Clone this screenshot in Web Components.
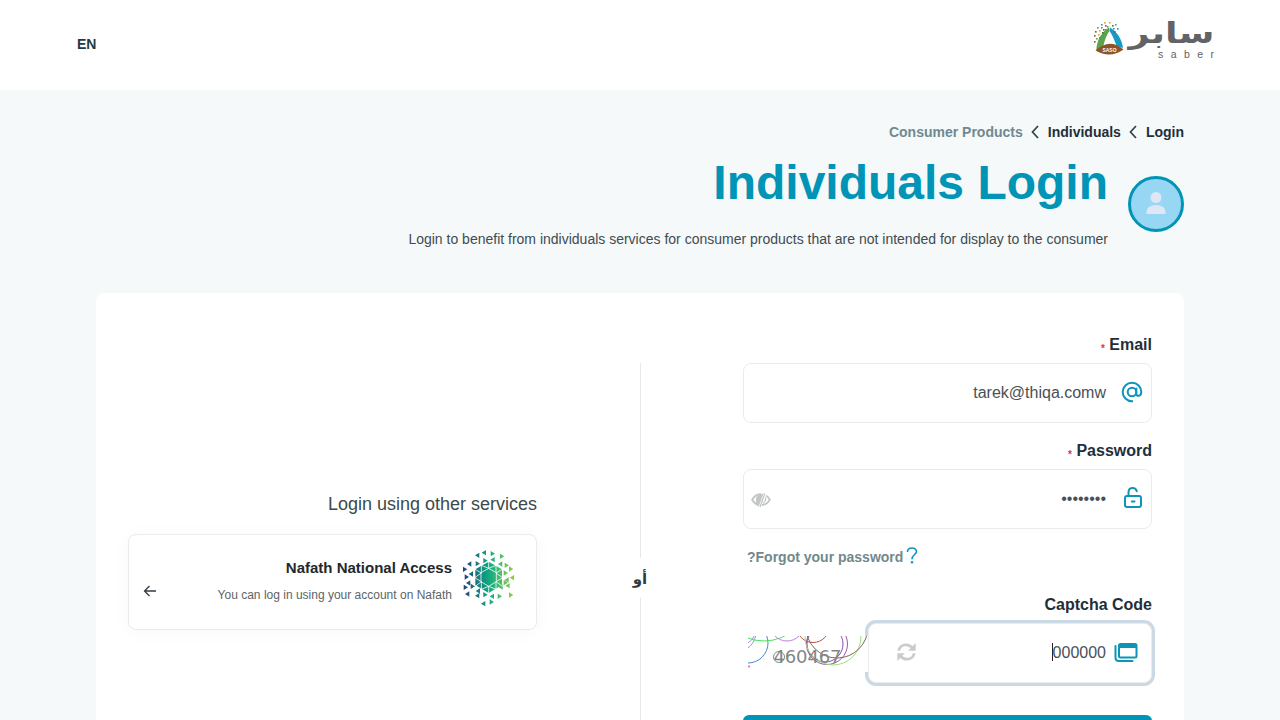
<!DOCTYPE html>
<html lang="ar" dir="rtl">
<head>
<meta charset="utf-8">
<title>Saber - Individuals Login</title>
<style>
html,body{margin:0;padding:0}
body{width:1280px;height:720px;overflow:hidden;background:#f5f9fa;font-family:"Liberation Sans",Arial,sans-serif;color:#1f2f3a}
</style>
</head>
<body>
<saber-page></saber-page>
<script>
const define = (name, html, setup) => customElements.define(name, class extends HTMLElement {
  constructor() {
    super();
    const t = document.createElement('template');
    t.innerHTML = html;
    this.attachShadow({mode: 'open'}).append(t.content.cloneNode(true));
  }
  connectedCallback() { if (setup) setup(this, this.shadowRoot); }
});

define('saber-logo', `
<style>:host{display:block;width:124px;height:42px}svg{display:block;overflow:visible}</style>
<svg width="124" height="42" viewBox="0 0 124 42" direction="ltr">
  <path d="M17 6.500C10 11 5 18 4.300 29L11.500 24.500C12.500 19 15 13.500 17.300 10Z" fill="#5fa348"/>
  <path d="M18 6.500C25 11 30 18 31 27L24.500 25C22.500 19 20 13 17.300 10Z" fill="#159bc4"/>
  <path d="M3.500 29.500Q17.500 16.500 31.500 28.500Q18 38 3.500 29.500Z" fill="#8b5527"/>
  <g id="dots"></g>
  <text x="17.500" y="31" font-family="Liberation Sans" font-weight="700" font-size="6" fill="#fff" text-anchor="middle" textLength="14" lengthAdjust="spacingAndGlyphs">SASO</text>
  <text x="36.500" y="22" font-family="DejaVu Sans,sans-serif" font-weight="700" font-size="29" fill="#626366" textLength="86" lengthAdjust="spacingAndGlyphs">سابر</text>
  <text x="66" y="37.300" font-family="Liberation Sans,sans-serif" font-size="10.500" fill="#626366" textLength="56">saber</text>
</svg>`, (el, r) => {
  const c = ['#5fa348','#159bc4','#8b5527','#e0a33a','#4d6f3c'];
  const p = [[5,6],[9,3],[13,4],[17,1],[20,4],[23,3],[25,7],[3,10],[7,9],[11,8],[15,5],[21,7],[2,14],[6,13],[10,11],[4,17],[7,16],[2,20],[12,1],[22,10],[13,8],[9,6]];
  r.getElementById('dots').innerHTML = p.map((q, i) => `<rect x="${q[0]}" y="${q[1]}" width="1.600" height="1.600" fill="${c[i % 5]}"/>`).join('');
});

define('site-header', `
<style>
:host{display:flex;box-sizing:border-box;height:90px;background:#fff;padding:21px 64px 0 77px;justify-content:space-between;align-items:flex-start}
a{font:700 14px/20px "Liberation Sans",Arial,sans-serif;color:#1f3a40;margin-top:13px}
</style>
<saber-logo></saber-logo><a>EN</a>`);

define('crumb-trail', `
<style>
:host{display:flex;height:20px;align-items:center;font-weight:700;font-size:14px;line-height:20px;direction:ltr;justify-content:flex-end}
.m{color:#71898e}svg{margin:0 8px;flex:none}span{white-space:nowrap}
</style>
<span class="m">Consumer Products</span>
<svg width="9" height="14" viewBox="0 0 9 14"><path d="M7 1L1.500 7L7 13" fill="none" stroke="#2f4248" stroke-width="1.700"/></svg>
<span>Individuals</span>
<svg width="9" height="14" viewBox="0 0 9 14"><path d="M7 1L1.500 7L7 13" fill="none" stroke="#2f4248" stroke-width="1.700"/></svg>
<span>Login</span>`);

define('user-badge', `
<style>:host{display:flex;box-sizing:border-box;width:56px;height:56px;border:3px solid #0094b6;border-radius:50%;background:#97d7f3;align-items:center;justify-content:center;flex:none}svg{margin-top:-2px}</style>
<svg width="20" height="22" viewBox="0 0 20 22"><circle cx="10" cy="5.500" r="5.500" fill="#dfe6f5"/><path d="M.500 21.500V20C.500 16 4 13 10 13S19.500 16 19.500 20V21.500Q19.500 22 19 22H1Q.500 22 .500 21.500Z" fill="#dfe6f5"/></svg>`);

define('page-intro', `
<style>
:host{display:block;padding:32px 96px 0;height:171px}
.row{display:flex;gap:20px;align-items:flex-start}
user-badge{margin-top:34px}
h1{margin:13px 0 0;font-size:48px;line-height:56px;font-weight:700;color:#0094b6}
p{margin:18px 0 0;font-size:14px;line-height:20px;color:#424b50;white-space:nowrap}
</style>
<crumb-trail></crumb-trail>
<div class="row"><user-badge></user-badge><div><h1>Individuals Login</h1><p>Login to benefit from individuals services for consumer products that are not intended for display to the consumer</p></div></div>`);

define('form-label', `
<style>:host{display:block;height:20px;font-size:16px;line-height:20px;font-weight:700;color:#1f2f3a}
i{font-style:normal;font-weight:700;color:#dc3545;font-size:10px;line-height:10px;display:none;vertical-align:-2px}:host([required]) i{display:inline-block}</style><slot></slot> <i>*</i>`);

define('input-box', `
<style>
:host{display:flex;box-sizing:border-box;height:60px;border:1px solid #e9ebec;border-radius:8px;background:#fff;align-items:center;padding:0 8px 0 7px}
.v{flex:1;font-size:16px;line-height:20px;color:#495057;display:flex;direction:ltr;justify-content:flex-end;align-items:center}
:host([focus]){box-shadow:0 0 0 3px #cbd9e4}
slot{display:flex}
</style>
<slot name="icon"></slot><div class="v"><slot></slot></div><slot name="end"></slot>`);

define('ui-icon', `<style>:host{display:block;flex:none}svg{display:block}</style><svg></svg>`, (el, r) => {
  const b = '#0d95b7', icons = {
    at: [22,22,`<g fill="none" stroke="${b}" stroke-width="2"><circle cx="11" cy="11" r="4.300"/><path d="M15.300 6.700V12.500C15.300 16 20.300 15.500 20.300 11A9.300 9.300 0 1 0 11 20.300H12"/></g>`],
    lock: [18,21,`<g fill="none" stroke="${b}" stroke-width="2" stroke-linecap="round"><rect x="1" y="9" width="16" height="11" rx="2"/><path d="M4.500 9V5.500C4.500-.200 11.500-.200 12.800 4.200M7.800 14.500H10.500"/></g>`],
    eye: [20,16,`<g fill="none" stroke="#c3c5c6" stroke-width="1.900"><path d="M10 2.300C5.500 2.300 2.800 5 1.200 7.700C2.500 10 4.500 12.200 7 12.800M15 3.500C17 4.600 18 6 18.800 7.700C17.300 10.700 14.500 12.800 11 13"/></g><path d="M12.500 1.500L7.500 15L5 10.500V6Q7 2.500 12.500 1.500Z" fill="#c3c5c6"/><path d="M13.800 1.500L9 15M14.500 5.500Q15.500 9 12.300 11" fill="none" stroke="#c3c5c6" stroke-width="1.300"/>`],
    sync: [19,18,`<g fill="none" stroke="#cbcbcb" stroke-width="2.700"><path d="M1.700 7.800C3 1.500 11-.500 15.700 5.200M17.300 10.200C16 16.500 8 18.500 3.300 12.800"/></g><path d="M18.700 0V7.800H11.200ZM.300 18V10.200H7.800Z" fill="#cbcbcb"/>`],
    window: [24,21,`<path d="M1.500 4V15.500Q1.500 19 5 19H18.500" fill="none" stroke="${b}" stroke-width="2" stroke-linecap="round"/><rect x="5" y="2" width="17.500" height="13.500" rx="1.500" fill="none" stroke="${b}" stroke-width="2"/><path d="M5 2H22.500V6H5Z" fill="${b}"/>`],
    arrow: [14,12,`<path d="M13 6H1.500M6.500 1L1.500 6L6.500 11" fill="none" stroke="#343c40" stroke-width="1.300"/>`],
    help: [12,17,`<path d="M1.500 5C1.500-.300 10.500-.300 10.500 4.500C10.500 7.500 6 7.700 6 12.200" fill="none" stroke="#0d95b7" stroke-width="1.600"/><circle cx="6" cy="15.300" r="1.200" fill="#0d95b7"/>`]
  };
  const [w, h, body] = icons[el.getAttribute('name')], s = r.querySelector('svg');
  s.setAttribute('width', w); s.setAttribute('height', h); s.setAttribute('viewBox', `0 0 ${w} ${h}`); s.innerHTML = body;
});

define('captcha-picture', `
<style>:host{display:block;width:120px;height:36px;background:#fff;position:relative;z-index:1}svg{display:block}</style>
<svg width="120" height="36" viewBox="0 0 120 36" direction="ltr">
 <g fill="none" stroke-width="1">
 <circle cx="0" cy="7" r="20" stroke="#4a88cc"/><circle cx="16" cy="-41" r="46" stroke="#4be05a"/><circle cx="-12" cy="-4" r="20" stroke="#56c98c"/><circle cx="-10" cy="-8" r="18" stroke="#b48ad0"/>
 <circle cx="39" cy="-12" r="17" stroke="#c080dc"/><circle cx="65" cy="-10" r="16.500" stroke="#b85048"/>
 <circle cx="77" cy="8" r="18" stroke="#8b4db0"/><circle cx="79" cy="8" r="20.500" stroke="#a05aa0"/><circle cx="85" cy="1" r="28" stroke="#9be07c"/><circle cx="89" cy="-9" r="31" stroke="#806858"/>
 <circle cx="31" cy="21" r="5.500" stroke="#6a9b8c"/><circle cx="1" cy="30.500" r=".7" stroke="#c060a0"/>
 </g>
 <text x="25.500" y="27" font-family="DejaVu Sans,sans-serif" font-size="18" fill="#858585" textLength="68">460467</text>
</svg>`);

define('login-form', `
<style>
:host{display:flex;flex-direction:column;padding-top:42px}
form-label{margin-bottom:8px}
.pw{margin-top:18px}
.forgot{display:flex;align-items:center;justify-content:flex-end;height:20px;margin-top:18px;padding-left:4px;font-size:14px;font-weight:700;color:#71898e;gap:3px}
.forgot ui-icon{margin-top:-4px}
.cap{margin-top:28px}
.row{display:flex}.row input-box{width:284px}.row captcha-picture{margin-top:13px}
.caret{width:1px;height:18px;background:#222}
.btn{height:50px;border-radius:6px;background:#0094b6;margin-top:32px}
</style>
<form-label required>Email</form-label>
<input-box><ui-icon slot="icon" name="at" style="margin:-2px 0 0 15px"></ui-icon>tarek@thiqa.comw</input-box>
<form-label required class="pw">Password</form-label>
<input-box><ui-icon slot="icon" name="lock" style="margin:-3px 1px 0 18px"></ui-icon><span>••••••••</span><ui-icon slot="end" name="eye" style="margin-top:2px"></ui-icon></input-box>
<div class="forgot"><ui-icon name="help"></ui-icon><span>Forgot your password?</span></div>
<form-label class="cap">Captcha Code</form-label>
<div class="row"><input-box focus><ui-icon slot="icon" name="window" style="margin:-1px 5px 0 8px"></ui-icon><span class="caret"></span><span>000000</span><ui-icon slot="end" name="sync" style="margin:-3px 0 0 21px"></ui-icon></input-box><captcha-picture></captcha-picture></div>
<div class="btn"></div>`);

define('or-divider', `
<style>
:host{display:flex;flex-direction:column;align-items:center;padding-top:70px;direction:ltr}
.l{width:1px;height:195px;background:#e6e8e9}
.t{height:40px;font:700 15px/42px "DejaVu Sans",sans-serif;color:#2f3a3f}
.l:last-child{height:auto;flex:1}
</style><div class="l"></div><div class="t">أو</div><div class="l"></div>`);

define('nafath-mark', `
<style>:host{display:block;width:51px;height:57px;flex:none}svg{display:block}</style>
<svg width="51" height="57" viewBox="1059 211 153 171"><defs><linearGradient id="g" gradientUnits="userSpaceOnUse" x1="1059" y1="0" x2="1212" y2="0"><stop offset="0" stop-color="#263e78"/><stop offset=".28" stop-color="#167b80"/><stop offset=".48" stop-color="#0fa382"/><stop offset=".68" stop-color="#38bd72"/><stop offset="1" stop-color="#9bcc3d"/></linearGradient></defs>
<g id="t" fill="url(#g)"></g></svg>`, (el, r) => {
  const L = [[1102,227],[1122,219],[1148,240],[1171,253],[1078,253],[1083,283],[1206,294],[1190,301],[1075,310],[1193,318],[1072,343],[1102,348],[1146,350],[1120,372],[1104,334],[1172,322]];
  const R = [[1148,222],[1176,230],[1126,243],[1190,257],[1203,268],[1103,252],[1065,269],[1070,292],[1187,280],[1067,323],[1088,320],[1187,309],[1203,346],[1169,350],[1145,367],[1126,345]];
  const tri = (q, s) => `<path d="M${q[0]-7*s} ${q[1]}L${q[0]+6*s} ${q[1]-8}V${q[1]+8}Z"/>`;
  r.getElementById('t').innerHTML = L.map(q => tri(q, 1)).join('') + R.map(q => tri(q, -1)).join('') +
   '<path d="M1136 246L1176 269V316L1136 340L1096 316V269Z"/><g fill="none" stroke="#fff" stroke-width="2.400"><path d="M1136 266L1159 279V306L1136 320L1113 306V279Z"/><path d="M1114 246V279M1114 306V340M1158 246V279M1158 306V340M1094 268L1114 280L1094 294L1114 306L1096 320M1178 268L1158 280L1178 294L1158 306L1178 320M1114 257L1136 266L1158 257M1114 329L1136 320L1158 329M1136 244V266M1136 320V342"/></g>';
});

define('other-services', `
<style>
:host{display:block;padding-top:199px}
h2{margin:0;font-size:18px;line-height:24px;font-weight:400;color:#3a4a4c}
.card{display:flex;box-sizing:border-box;height:96px;border:1px solid #e9ebec;border-radius:8px;margin-top:18px;padding:15px 22px 0 14px;box-shadow:0 2px 20px rgba(0,0,0,.03);background:#fff}
.txt{flex:1;padding:8px 11px 0 0}
b{display:block;font-size:15px;line-height:20px;color:#23282b}
small{display:block;font-size:12px;line-height:16px;color:#5d6468;margin-top:9px}
ui-icon{margin-top:35px}
</style>
<h2>Login using other services</h2>
<div class="card"><nafath-mark></nafath-mark><div class="txt"><b>Nafath National Access</b><small>You can log in using your account on Nafath</small></div><ui-icon name="arrow"></ui-icon></div>`);

define('login-card', `
<style>:host{display:grid;box-sizing:border-box;grid-template-columns:409px 206px 409px;margin:0 96px;padding:0 32px;height:427px;overflow:hidden;background:#fff;border-radius:8px 8px 0 0}</style>
<login-form></login-form><or-divider></or-divider><other-services></other-services>`);

define('saber-page', `<style>:host{display:block;height:720px;overflow:hidden}</style><site-header></site-header><page-intro></page-intro><login-card></login-card>`);
</script>
</body>
</html>
